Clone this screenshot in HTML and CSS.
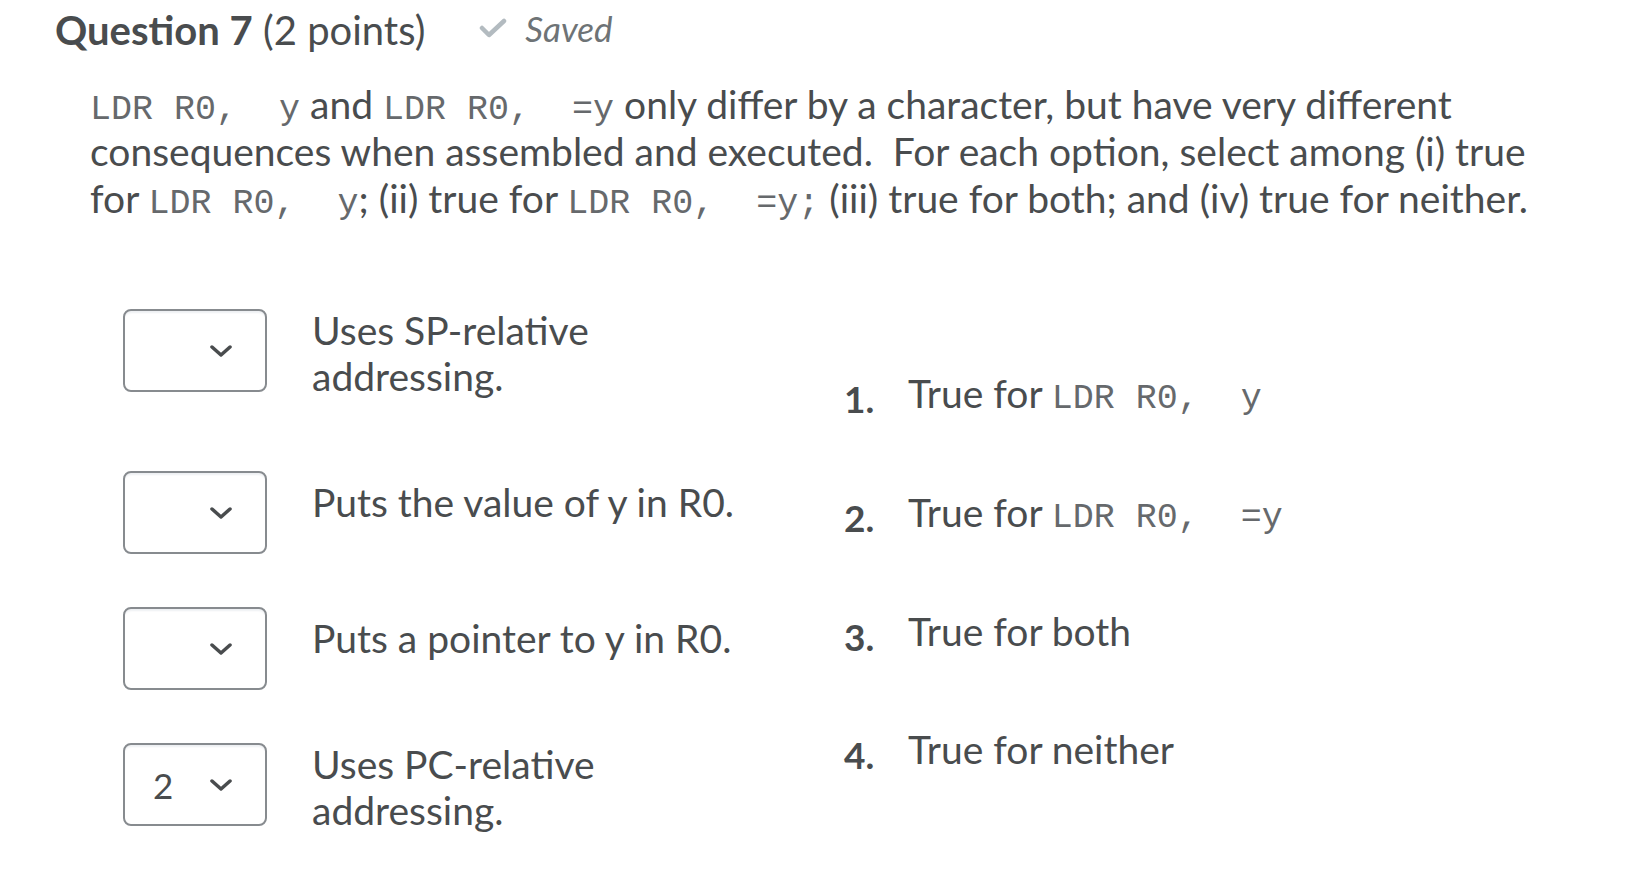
FILE: index.html
```html
<!DOCTYPE html>
<html lang="en">
<head>
    <meta charset="UTF-8">
    <meta name="viewport" content="width=device-width, initial-scale=1.0">
    <title>Question 7</title>
    <link rel="stylesheet" href="styles.css">
</head>
<body>
    <div class="question">
        <div class="question-header">
            <h2 class="question-title"><strong>Question 7</strong> (2 points)</h2>
            <span class="saved">
                <svg class="saved-check" width="28" height="20" viewBox="0 0 28 20"><polyline points="3,10 10,17 25,3" /></svg>
                Saved
            </span>
        </div>

        <p class="question-text">
            <code>LDR R0,&nbsp; y</code> and <code>LDR R0,&nbsp; =y</code> only differ by a character, but have very different<br>
            consequences when assembled and executed.&nbsp; For each option, select among (i) true<br>
            for <code>LDR R0,&nbsp; y</code>; (ii) true for <code>LDR R0,&nbsp; =y;</code> (iii) true for both; and (iv) true for neither.
        </p>

        <div class="matching">
            <div class="choices">
                <div class="choice">
                    <div class="select">
                        <span class="select-value"></span>
                        <svg class="chevron" width="22" height="12" viewBox="0 0 22 12"><polyline points="2,2 11,10 20,2" /></svg>
                    </div>
                    <span class="choice-text choice-text-wrap">Uses SP-relative addressing.</span>
                </div>
                <div class="choice">
                    <div class="select">
                        <span class="select-value"></span>
                        <svg class="chevron" width="22" height="12" viewBox="0 0 22 12"><polyline points="2,2 11,10 20,2" /></svg>
                    </div>
                    <span class="choice-text">Puts the value of y in R0.</span>
                </div>
                <div class="choice">
                    <div class="select">
                        <span class="select-value"></span>
                        <svg class="chevron" width="22" height="12" viewBox="0 0 22 12"><polyline points="2,2 11,10 20,2" /></svg>
                    </div>
                    <span class="choice-text">Puts a pointer to y in R0.</span>
                </div>
                <div class="choice">
                    <div class="select">
                        <span class="select-value">2</span>
                        <svg class="chevron" width="22" height="12" viewBox="0 0 22 12"><polyline points="2,2 11,10 20,2" /></svg>
                    </div>
                    <span class="choice-text choice-text-wrap">Uses PC-relative addressing.</span>
                </div>
            </div>

            <ol class="answers">
                <li><span class="answer-num">1.</span>True for <code>LDR R0,&nbsp; y</code></li>
                <li><span class="answer-num">2.</span>True for <code>LDR R0,&nbsp; =y</code></li>
                <li><span class="answer-num">3.</span>True for both</li>
                <li><span class="answer-num">4.</span>True for neither</li>
            </ol>
        </div>
    </div>
</body>
</html>
```

FILE: styles.css
```css
body {
    font-family: Lato, "Open Sans", sans-serif;
    margin: 0;
    background-color: #ffffff;
    color: #494c4e;
}
code {
    font-family: "Liberation Mono", "Courier New", monospace;
    font-size: 35px;
    line-height: 1;
    color: #66696c;
}
.question {
    padding-left: 55px;
}
.question-header {
    display: flex;
    align-items: center;
    gap: 54px;
    margin-top: 6px;
}
.question-title {
    margin: 0;
    font-size: 40px;
    line-height: 48px;
    font-weight: normal;
}
.question-title strong {
    font-weight: bold;
}
.saved {
    display: flex;
    align-items: center;
    gap: 18px;
    margin-bottom: 4px;
    font-size: 35px;
    font-style: italic;
    color: #6e7376;
}
.saved-check polyline {
    fill: none;
    stroke: #b3bbc0;
    stroke-width: 4.5;
    stroke-linecap: round;
    stroke-linejoin: round;
}
.question-text {
    margin: 27px 0 0 35px;
    font-size: 39px;
    line-height: 47px;
}
.matching {
    display: flex;
    align-items: flex-start;
    margin: 87px 0 0 68px;
}
.choices {
    width: 721px;
    display: grid;
    grid-template-rows: 162px 136px 136px auto;
}
.choice {
    display: flex;
    align-items: flex-start;
    gap: 45px;
}
.select {
    box-sizing: border-box;
    width: 144px;
    height: 83px;
    flex-shrink: 0;
    display: flex;
    align-items: center;
    padding: 0 33px 0 28px;
    border: 2px solid #878b8f;
    border-radius: 8px;
    box-shadow: inset 0 3px 2px -1px #eef0f3;
    font-size: 35px;
    background: #ffffff;
}
.chevron {
    margin-left: auto;
}
.chevron polyline {
    fill: none;
    stroke: #494c4e;
    stroke-width: 3.5;
    stroke-linecap: round;
    stroke-linejoin: round;
}
.choice-text {
    width: 440px;
    font-size: 39px;
    line-height: 46px;
    margin-top: 8px;
}
.choice-text-wrap {
    margin-top: -2px;
}
.answers {
    list-style: none;
    margin: 61px 0 0;
    padding: 0;
    font-size: 39px;
    line-height: 46px;
}
.answers li {
    margin-bottom: 72px;
}
.answer-num {
    display: inline-block;
    width: 64px;
    font-weight: bold;
    font-size: 37px;
    line-height: 30px;
    vertical-align: -5px;
}
```
